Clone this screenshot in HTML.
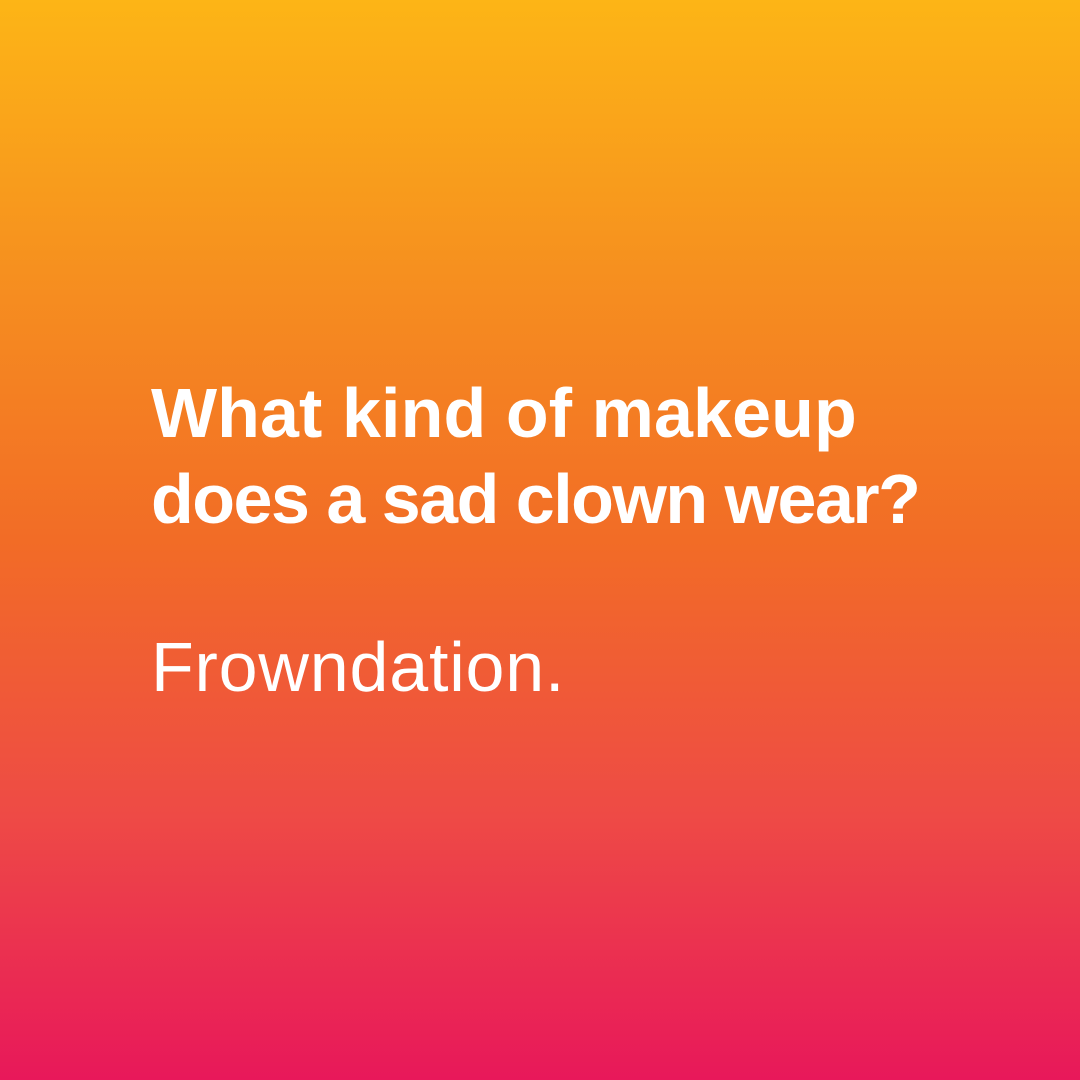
<!DOCTYPE html>
<html><head><style>
html,body{margin:0;padding:0}
body{width:1080px;height:1080px;overflow:hidden;background:linear-gradient(180deg,#FDB516 0%,#F6901F 25%,#F26C26 50%,#EE4B45 75%,#E8185A 100%);font-family:"Liberation Sans",sans-serif;color:#fff;position:relative}
.q{position:absolute;left:151px;top:370px;font-size:70px;font-weight:bold;line-height:86px}
.l1{letter-spacing:0.1px}
.l2{letter-spacing:-1.5px}
.a{position:absolute;left:151px;top:624px;font-size:70px;line-height:86px;letter-spacing:0.8px}
</style></head><body>
<div class="q"><span class="l1">What kind of makeup</span><br><span class="l2">does a sad clown wear?</span></div>
<div class="a">Frowndation.</div>
</body></html>
